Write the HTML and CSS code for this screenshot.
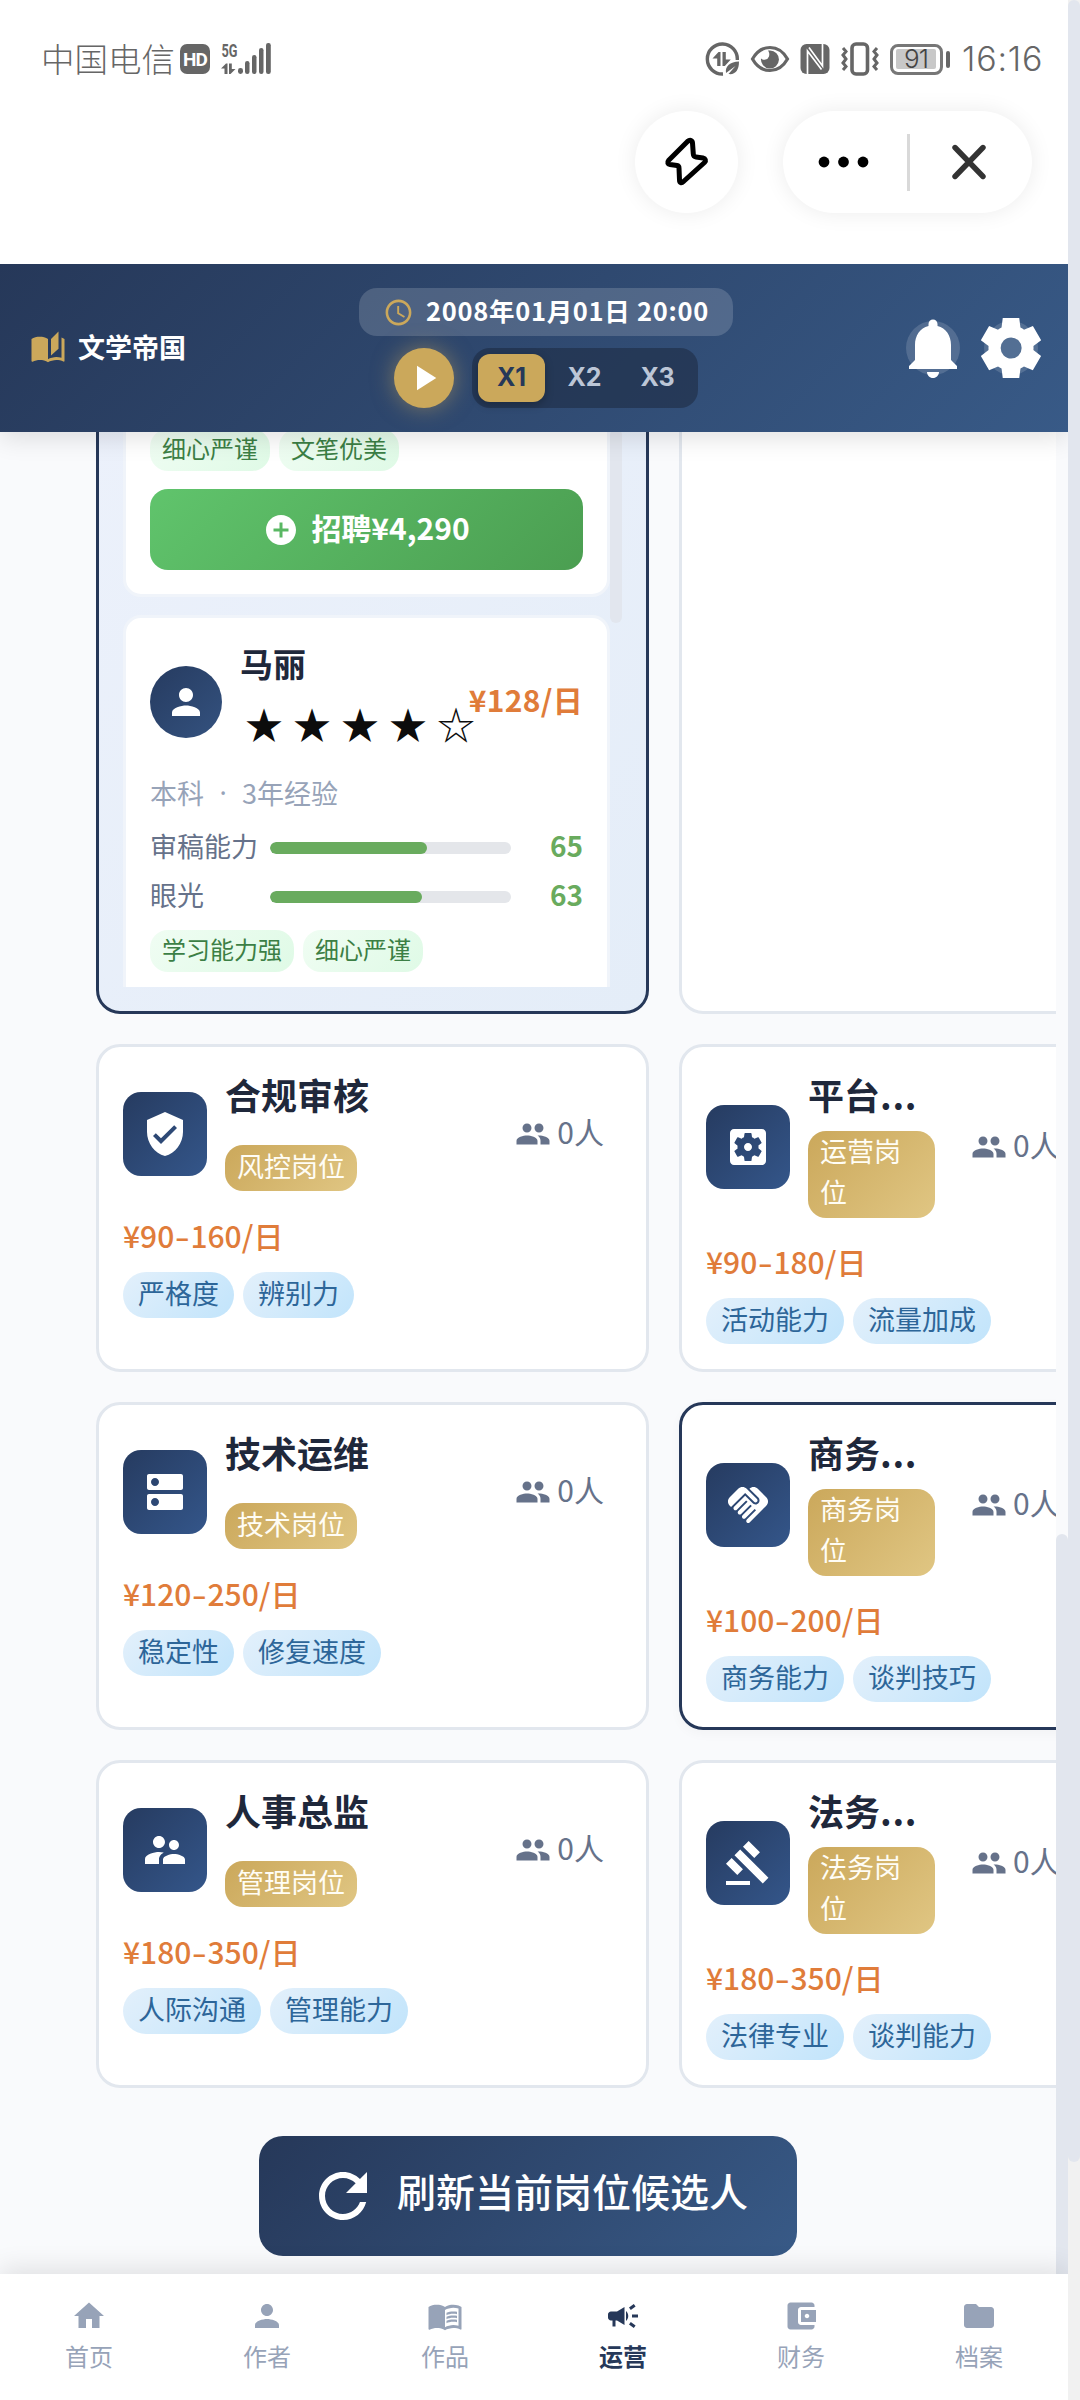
FILE: index.html
```html
<!DOCTYPE html>
<html lang="zh-CN">
<head>
<meta charset="utf-8">
<title>文学帝国</title>
<link rel="stylesheet" href="styles.css">
</head>
<body>
<svg class="defs" aria-hidden="true">
  <symbol id="i-people" viewBox="0 0 24 24"><path d="M16 11c1.66 0 2.99-1.34 2.99-3S17.66 5 16 5c-1.66 0-3 1.34-3 3s1.34 3 3 3zm-8 0c1.66 0 2.99-1.34 2.99-3S9.66 5 8 5C6.34 5 5 6.34 5 8s1.34 3 3 3zm0 2c-2.33 0-7 1.17-7 3.5V19h14v-2.5c0-2.33-4.67-3.5-7-3.5zm8 0c-.29 0-.62.02-.97.05 1.16.84 1.97 1.97 1.97 3.45V19h6v-2.5c0-2.33-4.67-3.5-7-3.5z"/></symbol>
  <symbol id="i-person" viewBox="0 0 24 24"><path d="M12 12c2.21 0 4-1.79 4-4s-1.79-4-4-4-4 1.79-4 4 1.79 4 4 4zm0 2c-2.67 0-8 1.34-8 4v2h16v-2c0-2.66-5.33-4-8-4z"/></symbol>
</svg>
<div class="screen">
  <div class="app">
    <div class="system">
      <div class="status">
        <div class="status-left">
          <span class="carrier">中国电信</span>
          <span class="hd">HD</span>
          <svg class="signal" width="50" height="32" viewBox="0 0 50 32">
            <text class="five-g" x="0.500" y="14" textLength="16" lengthAdjust="spacingAndGlyphs">5G</text>
            <path d="M6.500 20.500v10.500H3.500v-5.500H0l5-5zM8 20.500h2.800v5.500H14.500L9.500 31H8z" fill="#666"/>
            <g fill="#666"><rect x="17" y="25" width="5" height="6" rx="2.400"/><rect x="24" y="18" width="4.500" height="13" rx="2.200"/><rect x="31" y="12" width="4.500" height="19" rx="2.200"/><rect x="38" y="5" width="4.500" height="26" rx="2.200"/><rect x="45" y="0" width="4.800" height="31" rx="2.200"/></g>
          </svg>
        </div>
        <div class="status-right">
          <svg width="35" height="34" viewBox="0 0 35 34">
            <path d="M32.300 18A15 15 0 1 0 18 32" fill="none" stroke="#666" stroke-width="3.400"/>
            <path d="M15.500 10v14h-3.300v-7.500H7.500l6-6.500zM17.500 10h3.300v7.500h5l-6 6.500h-2.300z" fill="#666"/>
            <path d="M21 31c-1-7 4-11 13-11.500 0 9-4 13.500-10.500 12.500l7-8z" fill="#666"/>
          </svg>
          <svg width="40" height="28" viewBox="0 0 40 28">
            <path d="M2.500 14C7 6 13 2.500 20 2.500S33 6 37.500 14C33 22 27 25.500 20 25.500S7 22 2.500 14z" fill="none" stroke="#666" stroke-width="3.200"/>
            <path d="M20 5.500a9 9 0 1 1-9 8 5 5 0 0 0 8-2c.5-2 .5-4-1-6z" fill="#666"/>
          </svg>
          <svg width="30" height="32" viewBox="0 0 30 32">
            <rect x="0.500" y="1" width="29" height="30" rx="6" fill="#666"/>
            <path d="M7.500 31V8l14 18.500M9 4.500 22.500 23V1" fill="none" stroke="#fff" stroke-width="1.700"/>
          </svg>
          <svg width="40" height="34" viewBox="0 0 40 34" fill="none" stroke="#666">
            <rect x="12" y="2" width="15.500" height="30" rx="4" stroke-width="3.600"/>
            <path d="M3 6l3 3.500-3 3.500 3 4-3 4 3 3.500-3 3.500M37 6l-3 3.500 3 3.500-3 4 3 4-3 3.500 3 3.500" stroke-width="3"/>
          </svg>
          <span class="battery"><span>91</span></span>
          <span class="clock">16:16</span>
        </div>
      </div>
      <div class="mini-bar">
        <div class="round-btn">
          <svg width="46" height="50" viewBox="0 0 46 50" fill="none" stroke="#000" stroke-width="5" stroke-linejoin="round"><path d="M23.500 4.500 4.500 23.500c-1.500 1.800-.8 3.600 1.500 4l7 1c1.500.3 2 1 2 2.500L15.500 43c0 3 2 3.500 4 1.500L40.500 25.500c1.800-1.800 1-4-1.500-4.500l-7-1c-2-.3-2.600-1-2.700-3L28.500 6c-.2-3-2.700-3.500-5-1.500z"/></svg>
        </div>
        <div class="capsule">
          <svg class="dots" width="54" height="12" viewBox="0 0 54 12"><circle cx="7" cy="6" r="5.400"/><circle cx="26.500" cy="6" r="5.400"/><circle cx="46" cy="6" r="5.400"/></svg>
          <span class="divider"></span>
          <svg class="close" width="36" height="36" viewBox="0 0 36 36"><path d="M4 3.500 32 32.500M32 3.500 4 32.500" stroke="#333" stroke-width="5.400" stroke-linecap="round"/></svg>
        </div>
      </div>
    </div>

    <header class="header">
      <div class="brand">
        <svg width="36" height="36" viewBox="0 0 24 24" fill="#cba85b"><path d="M19 1l-5 5v11l5-4.500V1zM1 6v14.650c0 .25.25.5.5.5.1 0 .15-.05.25-.05C3.100 20.450 5.050 20 6.500 20c1.950 0 4.050.4 5.500 1.500V6c-1.450-1.100-3.550-1.500-5.500-1.500S2.450 4.900 1 6zm22 13.500V6c-.6-.45-1.250-.75-2-1v13.500c-1.100-.35-2.300-.5-3.500-.5-1.700 0-4.150.65-5.500 1.500v2c1.350-.85 3.800-1.500 5.500-1.500 1.650 0 3.350.3 4.750 1.050.1.05.15.05.25.05.25 0 .5-.25.5-.5v-1.100z"/></svg>
        <span>文学帝国</span>
      </div>
      <div class="time">
        <div class="date">
          <svg width="31" height="31" viewBox="0 0 24 24" fill="#cba85b"><path d="M11.990 2C6.470 2 2 6.480 2 12s4.470 10 9.990 10C17.520 22 22 17.520 22 12S17.520 2 11.990 2zM12 20c-4.420 0-8-3.580-8-8s3.580-8 8-8 8 3.580 8 8-3.580 8-8 8zm.5-13H11v6l5.250 3.150.75-1.230-4.500-2.670z"/></svg>
          <span>2008年01月01日 20:00</span>
        </div>
        <div class="controls">
          <span class="play"><svg width="42" height="42" viewBox="0 0 24 24" fill="#fff"><path d="M8 5v14l11-7z"/></svg></span>
          <div class="speeds"><span class="speed on">X1</span><span class="speed">X2</span><span class="speed">X3</span></div>
        </div>
      </div>
      <div class="actions">
        <span class="act"><svg width="72" height="72" viewBox="0 0 24 24" fill="#fff"><path d="M12 22c1.100 0 2-.9 2-2h-4c0 1.100.89 2 2 2zm6-6v-5c0-3.070-1.640-5.640-4.500-6.320V4c0-.83-.67-1.500-1.500-1.500s-1.500.67-1.500 1.500v.68C7.630 5.360 6 7.920 6 11v5l-2 2v1h16v-1l-2-2z"/></svg></span>
        <span class="act"><svg width="72" height="72" viewBox="0 0 24 24" fill="#fff"><path d="m9.250 22-.4-3.200q-.325-.125-.612-.3-.288-.175-.563-.375L4.700 19.375l-2.750-4.750 2.575-1.950Q4.500 12.500 4.500 12.337v-.675q0-.162.025-.337L1.950 9.375l2.750-4.750 2.975 1.250q.275-.2.575-.375.3-.175.6-.3l.4-3.200h5.500l.4 3.200q.325.125.613.3.287.175.562.375l2.975-1.250 2.750 4.750-2.575 1.950q.025.175.025.337v.675q0 .163-.05.338l2.575 1.950-2.750 4.750-2.950-1.250q-.275.2-.575.375-.3.175-.6.3l-.4 3.200zM12.050 15.500q1.450 0 2.475-1.025Q15.550 13.450 15.550 12q0-1.450-1.025-2.475Q13.500 8.500 12.050 8.500q-1.475 0-2.488 1.025Q8.550 10.550 8.550 12q0 1.450 1.012 2.475Q10.575 15.500 12.050 15.500z"/></svg></span>
      </div>
    </header>

    <main class="main">
      <div class="scroller">
        <div class="grid">
          <section class="job tall picked">
            <div class="candidates">
              <div class="list">
                <article class="cand cand-first">
                  <div class="traits"><span>细心严谨</span><span>文笔优美</span></div>
                  <div class="hire"><svg width="36" height="36" viewBox="0 0 24 24" fill="#fff"><path d="M12 2C6.480 2 2 6.480 2 12s4.480 10 10 10 10-4.480 10-10S17.520 2 12 2zm5 11h-4v4h-2v-4H7v-2h4V7h2v4h4v2z"/></svg><span>招聘¥4,290</span></div>
                </article>
                <article class="cand">
                  <div class="cand-head">
                    <span class="avatar"><svg width="42" height="42"><use href="#i-person"/></svg></span>
                    <div class="who"><div class="name">马丽</div><div class="stars"><i>★</i><i>★</i><i>★</i><i>★</i><i>☆</i></div></div>
                    <div class="pay">¥128/日</div>
                  </div>
                  <div class="meta"><span>本科</span><span class="sep">·</span><span>3年经验</span></div>
                  <div class="stat"><span class="label">审稿能力</span><span class="bar"><b style="width:65%"></b></span><span class="val">65</span></div>
                  <div class="stat"><span class="label">眼光</span><span class="bar"><b style="width:63%"></b></span><span class="val">63</span></div>
                  <div class="traits"><span>学习能力强</span><span>细心严谨</span></div>
                  <div class="hire"></div>
                </article>
              </div>
              <span class="thumb"></span>
            </div>
          </section>
          <section class="job tall"></section>

          <section class="job">
            <div class="head">
              <span class="icon"><svg width="48" height="48" viewBox="0 0 24 24"><path d="M12 1L3 5v6c0 5.550 3.840 10.740 9 12 5.160-1.260 9-6.450 9-12V5l-9-4zm-2 16l-4-4 1.410-1.410L10 14.170l6.590-6.590L18 9l-8 8z"/></svg></span>
              <div class="info"><div class="title">合规审核</div><span class="dept">风控岗位</span></div>
              <div class="count"><svg width="36" height="36"><use href="#i-people"/></svg><span>0人</span></div>
            </div>
            <div class="salary">¥90<s>-</s>160/日</div>
            <div class="skills"><span>严格度</span><span>辨别力</span></div>
          </section>
          <section class="job">
            <div class="head narrow">
              <span class="icon"><svg width="48" height="48" viewBox="0 0 24 24"><path d="M12 10c-1.100 0-2 .9-2 2s.9 2 2 2 2-.9 2-2-.9-2-2-2zm7-7H5c-1.110 0-2 .9-2 2v14c0 1.100.89 2 2 2h14c1.110 0 2-.9 2-2V5c0-1.100-.89-2-2-2zm-1.750 9c0 .23-.02.46-.05.68l1.480 1.160c.13.11.17.3.08.45l-1.400 2.420c-.09.15-.27.21-.43.15l-1.740-.7c-.36.28-.76.51-1.180.69l-.26 1.850c-.03.17-.18.3-.35.3h-2.800c-.17 0-.32-.13-.35-.29l-.26-1.850c-.43-.18-.82-.41-1.180-.69l-1.740.7c-.16.06-.34 0-.43-.15l-1.400-2.420c-.09-.15-.05-.34.08-.45l1.480-1.160c-.03-.23-.05-.46-.05-.69 0-.23.02-.46.05-.68l-1.480-1.160c-.13-.11-.17-.3-.08-.45l1.400-2.420c.09-.15.27-.21.43-.15l1.740.7c.36-.28.76-.51 1.180-.69l.26-1.850c.03-.17.18-.3.35-.3h2.800c.17 0 .32.13.35.29l.26 1.850c.43.18.82.41 1.180.69l1.740-.7c.16-.06.34 0 .43.15l1.400 2.420c.09.15.05.34-.08.45l-1.480 1.160c.03.23.05.46.05.69z"/></svg></span>
              <div class="info"><div class="title">平台<em>...</em></div><span class="dept">运营岗位</span></div>
              <div class="count"><svg width="36" height="36"><use href="#i-people"/></svg><span>0人</span></div>
            </div>
            <div class="salary">¥90<s>-</s>180/日</div>
            <div class="skills"><span>活动能力</span><span>流量加成</span></div>
          </section>

          <section class="job">
            <div class="head">
              <span class="icon"><svg width="48" height="48" viewBox="0 0 24 24"><path d="M20 13H4c-.55 0-1 .45-1 1v6c0 .55.45 1 1 1h16c.55 0 1-.45 1-1v-6c0-.55-.45-1-1-1zM7 19c-1.100 0-2-.9-2-2s.9-2 2-2 2 .9 2 2-.9 2-2 2zM20 3H4c-.55 0-1 .45-1 1v6c0 .55.45 1 1 1h16c.55 0 1-.45 1-1V4c0-.55-.45-1-1-1zM7 9c-1.100 0-2-.9-2-2s.9-2 2-2 2 .9 2 2-.9 2-2 2z"/></svg></span>
              <div class="info"><div class="title">技术运维</div><span class="dept">技术岗位</span></div>
              <div class="count"><svg width="36" height="36"><use href="#i-people"/></svg><span>0人</span></div>
            </div>
            <div class="salary">¥120<s>-</s>250/日</div>
            <div class="skills"><span>稳定性</span><span>修复速度</span></div>
          </section>
          <section class="job outlined">
            <div class="head narrow">
              <span class="icon"><svg width="48" height="48" viewBox="0 0 24 24"><path d="M16.480 10.410c-.39.39-1.040.39-1.430 0l-4.470-4.460-7.050 7.040-.66-.63c-1.170-1.170-1.170-3.070 0-4.240l4.240-4.240c1.170-1.170 3.070-1.170 4.240 0l5.130 5.120c.39.37.39 1.020 0 1.410zm.7-2.120c.78.78.78 2.050 0 2.830-1.270 1.270-2.610.22-2.830 0l-3.760-3.760-5.570 5.570c-.39.39-.39 1.020 0 1.410.39.39 1.020.39 1.420 0l4.620-4.620.71.71-4.620 4.620c-.39.39-.39 1.020 0 1.410.39.39 1.020.39 1.420 0l4.620-4.620.71.71-4.620 4.620c-.39.39-.39 1.020 0 1.410.39.39 1.020.39 1.410 0l4.620-4.620.71.71-4.620 4.620c-.39.39-.39 1.020 0 1.410.39.39 1.020.39 1.410 0l8.320-8.340c1.170-1.170 1.170-3.070 0-4.240l-4.240-4.240c-1.150-1.150-3.010-1.170-4.180-.06l4.470 4.470z"/></svg></span>
              <div class="info"><div class="title">商务<em>...</em></div><span class="dept">商务岗位</span></div>
              <div class="count"><svg width="36" height="36"><use href="#i-people"/></svg><span>0人</span></div>
            </div>
            <div class="salary">¥100<s>-</s>200/日</div>
            <div class="skills"><span>商务能力</span><span>谈判技巧</span></div>
          </section>

          <section class="job">
            <div class="head">
              <span class="icon"><svg width="48" height="48" viewBox="0 0 24 24"><path d="M16.500 12c1.380 0 2.490-1.120 2.490-2.500S17.880 7 16.500 7C15.120 7 14 8.120 14 9.500s1.120 2.500 2.500 2.500zM9 11c1.660 0 2.990-1.340 2.990-3S10.660 5 9 5C7.340 5 6 6.340 6 8s1.340 3 3 3zm7.500 3c-1.830 0-5.500.92-5.500 2.750V19h11v-2.250c0-1.830-3.670-2.750-5.500-2.750zM9 13c-2.330 0-7 1.170-7 3.500V19h7v-2.250c0-.85.33-2.340 2.370-3.470C10.500 13.100 9.660 13 9 13z"/></svg></span>
              <div class="info"><div class="title">人事总监</div><span class="dept">管理岗位</span></div>
              <div class="count"><svg width="36" height="36"><use href="#i-people"/></svg><span>0人</span></div>
            </div>
            <div class="salary">¥180<s>-</s>350/日</div>
            <div class="skills"><span>人际沟通</span><span>管理能力</span></div>
          </section>
          <section class="job">
            <div class="head narrow">
              <span class="icon"><svg width="48" height="48" viewBox="0 0 24 24"><path d="M1 21h12v2H1zM5.245 8.070l2.830-2.827 14.140 14.142-2.828 2.828zM12.317 1l5.657 5.656-2.830 2.830-5.654-5.660zM3.825 9.485l5.657 5.657-2.828 2.828-5.657-5.657z"/></svg></span>
              <div class="info"><div class="title">法务<em>...</em></div><span class="dept">法务岗位</span></div>
              <div class="count"><svg width="36" height="36"><use href="#i-people"/></svg><span>0人</span></div>
            </div>
            <div class="salary">¥180<s>-</s>350/日</div>
            <div class="skills"><span>法律专业</span><span>谈判能力</span></div>
          </section>
        </div>
        <div class="refresh"><svg width="72" height="72" viewBox="0 0 24 24" fill="#fff"><path d="M17.650 6.350C16.200 4.900 14.210 4 12 4c-4.420 0-7.990 3.580-7.990 8s3.570 8 7.990 8c3.730 0 6.840-2.550 7.730-6h-2.080c-.82 2.330-3.040 4-5.650 4-3.310 0-6-2.690-6-6s2.690-6 6-6c1.660 0 3.140.69 4.220 1.780L13 11h7V4l-2.350 2.350z"/></svg><span>刷新当前岗位候选人</span></div>
      </div>
      <div class="inner-track"><span></span></div>
    </main>

    <nav class="nav">
      <a><svg viewBox="0 0 24 24"><path d="M10 20v-6h4v6h5v-8h3L12 3 2 12h3v8z"/></svg><span>首页</span></a>
      <a><svg viewBox="0 0 24 24"><use href="#i-person"/></svg><span>作者</span></a>
      <a><svg viewBox="0 0 24 24"><path d="M21 5c-1.110-.35-2.330-.5-3.500-.5-1.950 0-4.050.4-5.500 1.500-1.450-1.100-3.550-1.500-5.500-1.500S2.450 4.900 1 6v14.650c0 .25.25.5.5.5.1 0 .15-.05.25-.05C3.100 20.450 5.050 20 6.500 20c1.950 0 4.050.4 5.500 1.500 1.350-.85 3.800-1.500 5.500-1.500 1.650 0 3.350.3 4.750 1.050.1.05.15.05.25.05.25 0 .5-.25.5-.5V6c-.6-.45-1.250-.75-2-1zm0 13.500c-1.100-.35-2.300-.5-3.500-.5-1.700 0-4.150.65-5.500 1.500V8c1.350-.85 3.800-1.500 5.500-1.500 1.200 0 2.400.15 3.500.5v11.500z"/><path d="M17.500 10.500c.88 0 1.730.09 2.500.26V9.240c-.79-.15-1.640-.24-2.500-.24-1.700 0-3.240.29-4.500.83v1.660c1.130-.64 2.700-.99 4.500-.99zM13 12.490v1.660c1.130-.64 2.700-.99 4.500-.99.88 0 1.730.09 2.500.26V11.900c-.79-.15-1.640-.24-2.500-.24-1.700 0-3.240.3-4.500.83zM17.500 14.330c-1.700 0-3.240.29-4.500.83v1.660c1.130-.64 2.700-.99 4.500-.99.88 0 1.730.09 2.500.26v-1.520c-.79-.16-1.640-.24-2.500-.24z"/></svg><span>作品</span></a>
      <a class="on"><svg viewBox="0 0 24 24"><path d="M18 11v2h4v-2h-4zm-2 6.610c.96.71 2.210 1.650 3.200 2.390.4-.53.8-1.070 1.200-1.600-.99-.74-2.240-1.680-3.200-2.400-.4.54-.8 1.080-1.200 1.610zM20.400 5.600c-.4-.53-.8-1.070-1.200-1.600-.99.74-2.240 1.680-3.200 2.400.4.53.8 1.070 1.200 1.600.96-.72 2.210-1.650 3.200-2.400zM4 9c-1.100 0-2 .9-2 2v2c0 1.100.9 2 2 2h1v4h2v-4h1l5 3V6L8 9H4zm11.500 3c0-1.330-.58-2.530-1.500-3.350v6.690c.92-.81 1.500-2.010 1.500-3.340z"/></svg><span>运营</span></a>
      <a><svg viewBox="0 0 24 24"><path d="M21 18v1c0 1.100-.9 2-2 2H5c-1.110 0-2-.9-2-2V5c0-1.100.89-2 2-2h14c1.100 0 2 .9 2 2v1h-9c-1.110 0-2 .9-2 2v8c0 1.100.89 2 2 2h9zm-9-2h10V8H12v8zm4-2.500c-.83 0-1.500-.67-1.500-1.500s.67-1.500 1.500-1.500 1.500.67 1.500 1.500-.67 1.500-1.500 1.500z"/></svg><span>财务</span></a>
      <a><svg viewBox="0 0 24 24"><path d="M10 4H4c-1.100 0-1.990.9-1.990 2L2 18c0 1.100.9 2 2 2h16c1.100 0 2-.9 2-2V8c0-1.100-.9-2-2-2h-8l-2-2z"/></svg><span>档案</span></a>
    </nav>
  </div>
  <div class="outer-track"><span></span></div>
</div>
</body>
</html>
```
FILE: styles.css
```css
* { box-sizing: border-box; }
body {
  margin: 0;
  background: #fff;
  font-family: "Noto Sans CJK SC", sans-serif;
  color: #1f283b;
}
svg { display: block; flex: none; }
i, em { font-style: normal; }
s { display: inline-block; margin: 0 2.700px; text-decoration: none; transform: scaleX(1.400); }
.defs { position: absolute; width: 0; height: 0; }
.screen { display: flex; width: 1080px; height: 2400px; overflow: hidden; }
.app { display: flex; flex-direction: column; width: 1068px; height: 2400px; }

.outer-track { width: 12px; background: #f1f1f1; }
.outer-track span { display: block; height: 2162px; border-radius: 6px; background: #e2e6ee; }

/* system area */
.system { height: 264px; padding-top: 38px; background: #fff; }
.status { display: flex; justify-content: space-between; height: 42px; padding: 0 26px 0 41px; color: #666; }
.status-left, .status-right { display: flex; align-items: center; }
.carrier { position: relative; top: -1px; width: 139px; font-size: 33.500px; font-weight: 300; line-height: 42px; white-space: nowrap; }
.hd {
  width: 30px; height: 30px; margin-right: 11px; border-radius: 7px;
  background: #666; color: #fff; text-align: center;
  font: 700 19px/31px "Roboto", sans-serif; letter-spacing: -1px;
}
.signal { overflow: visible; }
.five-g { font: 700 18.500px "Roboto", sans-serif; fill: #666; }
.status-right { gap: 10px; }
.battery {
  position: relative; width: 53px; height: 31px; padding: 3px; margin-right: 9px;
  border: 3px solid #777; border-radius: 8px;
}
.battery::after { content: ""; position: absolute; right: -10px; top: 4px; width: 4px; height: 17px; border-radius: 2px; background: #666; }
.battery span {
  display: block; width: 40px; height: 20px; margin-top: -.5px; border-radius: 2px; background: #c8c8c8;
  color: #444; text-align: center; font: 300 26px/20px "Inter", sans-serif; letter-spacing: -1px;
}
.clock { font: 300 34px/42px "Inter", sans-serif; letter-spacing: .8px; width: 80px; white-space: nowrap; }
.mini-bar { display: flex; justify-content: flex-end; gap: 45px; padding: 31px 36px 0 0; }
.round-btn, .capsule { display: flex; align-items: center; height: 102px; border-radius: 51px; background: #fff; box-shadow: 0 0 22px rgba(0,0,0,.08); }
.round-btn { width: 103px; justify-content: center; }
.capsule { width: 249px; padding-left: 34px; }
.divider { width: 3px; height: 57px; margin: 0 41px 0 36px; background: #d9d9d9; }

/* header */
.header {
  position: relative; z-index: 2;
  display: flex; justify-content: space-between; height: 168px; padding: 24px 30px;
  background: linear-gradient(135deg, #263859 0%, #385a87 100%);
  box-shadow: 0 6px 24px rgba(0,0,0,.12);
  clip-path: inset(0 0 -36px 0);
}
.brand { display: flex; align-items: center; gap: 12px; width: 329px; color: #fff; font-size: 27px; font-weight: 700; }
.brand span { position: relative; top: -2px; }
.time { display: flex; flex-direction: column; gap: 12px; width: 374px; align-items: center; }
.date {
  display: flex; align-items: center; gap: 12px; width: 374px; height: 48px; padding-left: 24px;
  border-radius: 18px; background: rgba(255,255,255,.16);
  color: #fff; font-size: 25.500px; font-weight: 700; letter-spacing: .700px; white-space: nowrap;
}
.date span { position: relative; top: -3px; }
.controls { display: flex; gap: 18px; }
.play {
  display: flex; align-items: center; justify-content: center; width: 60px; height: 60px;
  border-radius: 50%; background: #cba85b; box-shadow: 0 0 22px rgba(203,168,91,.5);
}
.speeds { display: flex; gap: 6px; width: 226px; padding: 6px; border-radius: 18px; background: rgba(30,45,70,.62); }
.speed { width: 67px; height: 48px; border-radius: 12px; color: #bcc6d6; text-align: center; font: 700 25px/47px "Inter", sans-serif; }
.speed.on { background: #cba85b; color: #263859; box-shadow: 0 3px 8px rgba(0,0,0,.25); }
.actions { display: flex; align-items: center; justify-content: flex-end; gap: 24px; width: 305px; }
.act { display: flex; align-items: center; justify-content: center; width: 54px; height: 54px; border-radius: 50%; background: rgba(255,255,255,.15); }

/* content */
.main { display: flex; flex: 1; height: 1842px; background: #f9fafc; overflow: hidden; }
.scroller { width: 1056px; overflow: hidden; }
.inner-track { width: 12px; }
.inner-track span { display: block; height: 760px; margin-top: 1102px; border-radius: 6px; background: #e2e6ee; }
.grid {
  display: grid; grid-template-columns: 553px 553px; grid-template-rows: 612px 328px 328px 328px; gap: 30px;
  margin: -30px 0 0 96px; width: 1136px;
}
.job { padding: 24px; border: 3px solid #e2e7ee; border-radius: 24px; background: #fff; min-width: 0; }
.job.picked { border-color: #263859; background: linear-gradient(135deg, #ecf1fb 0%, #e4edf8 100%); }
.job.outlined { border-color: #263859; box-shadow: 0 4px 12px rgba(0,0,0,.03); }

.candidates { display: flex; height: 558px; overflow: hidden; }
.list { width: 487px; height: 558px; overflow: hidden; }
.thumb { width: 12px; height: 194px; border-radius: 6px; background: #e2e6ee; }
.cand { padding: 24px; border: 3px solid #f0f4fa; border-radius: 18px; background: #fff; }
.cand-first { margin: -30px 0 18px; padding-top: 27px; }
.traits { display: flex; gap: 9px; }
.traits span {
  height: 42px; padding: 0 12px; border-radius: 18px; font-size: 24px; line-height: 37px; color: #3c7f45;
  background: linear-gradient(135deg, #f0fdf3 0%, #dffae6 100%); white-space: nowrap;
}
.hire {
  display: flex; align-items: center; justify-content: center; gap: 12px; height: 81px; margin-top: 18px;
  border-radius: 18px; background: linear-gradient(135deg, #60c46c 0%, #4b9e51 100%);
  color: #fff; font-size: 30px; font-weight: 700;
}
.hire span { position: relative; top: -3px; }
.cand-head { display: flex; align-items: center; height: 120px; }
.avatar { display: flex; flex: none; align-items: center; justify-content: center; width: 72px; height: 72px; border-radius: 50%; background: linear-gradient(135deg, #263b60, #34527f); fill: #fff; }
.who { flex: 1; min-width: 0; margin-left: 18px; }
.name { height: 48px; font-size: 33px; font-weight: 700; line-height: 43px; }
.stars { display: flex; height: 72px; color: #0c0c0c; }
.stars i { width: 48px; flex: none; text-align: center; font-size: 38px; line-height: 66px; }
.pay { flex: none; position: relative; top: -3px; z-index: 1; color: #e07c3a; font-size: 30px; font-weight: 700; letter-spacing: .300px; white-space: nowrap; }
.meta { display: flex; gap: 14px; height: 40px; margin: 12px 0 13px; color: #97a3b8; font-size: 27px; line-height: 38px; }
.meta .sep { width: 10px; text-align: center; font-family: "Noto Sans", sans-serif; }
.stat { display: flex; align-items: center; height: 41px; margin-bottom: 8px; }
.label { width: 120px; color: #66728a; font-size: 27px; line-height: 39px; position: relative; top: -2px; }
.bar { width: 241px; height: 12px; border-radius: 6px; background: #e4e6ea; overflow: hidden; }
.bar b { display: block; height: 12px; border-radius: 6px; background: #69ab5e; }
.val { flex: 1; text-align: right; color: #69ab5e; font-size: 28px; font-weight: 700; line-height: 39px; position: relative; top: -2px; }
.stat + .traits { margin-top: 13px; }

.head { display: flex; align-items: center; height: 126px; }
.head.narrow { height: 152px; }
.icon { display: flex; flex: none; align-items: center; justify-content: center; width: 84px; height: 84px; border-radius: 18px; background: linear-gradient(135deg, #263b60, #34568a); fill: #fff; }
.info { display: flex; flex-direction: column; align-items: flex-start; justify-content: space-between; height: 100%; margin-left: 18px; padding-bottom: 6px; }
.title { font-size: 36px; font-weight: 700; line-height: 46px; white-space: nowrap; }
.title em { margin-left: 0; letter-spacing: .700px; }
.dept { padding: 1px 12px 5px; border-radius: 18px; background: linear-gradient(135deg, #cba85b, #e0c683); color: #fffdf5; font-size: 27px; line-height: 40.500px; }
.narrow .info { width: 127px; padding-bottom: 5px; }
.narrow .dept { width: 127px; padding: 0 12px 6px; }
.count { display: flex; align-items: center; gap: 6px; margin-left: auto; padding-right: 18px; color: #66728a; fill: #66728a; font-size: 30px; white-space: nowrap; }
.count span { position: relative; top: -3px; }
.narrow .count { margin-left: 36px; }
.salary { height: 45px; margin: 18px 0 12px; color: #e07c3a; font-size: 30px; font-weight: 500; line-height: 41px; }
.skills { display: flex; gap: 9px; }
.skills span { height: 46px; padding: 0 15px; border-radius: 23px; background: linear-gradient(135deg, #e3f0fb, #c1e4fb); color: #2d6699; font-size: 27px; line-height: 42px; white-space: nowrap; }

.refresh {
  display: flex; align-items: center; gap: 18px; width: 538px; height: 120px; margin: 48px auto 0; padding-left: 48px;
  border-radius: 24px; background: linear-gradient(135deg, #263859 0%, #385a87 100%);
  color: #fff; font-size: 39px; font-weight: 500; white-space: nowrap;
}
.refresh span { position: relative; top: -6px; }

.nav { position: relative; z-index: 2; display: flex; height: 126px; background: #fff; box-shadow: 0 -6px 24px rgba(0,0,0,.1); clip-path: inset(-36px 0 0 0); }
.nav a { display: flex; flex: 1; flex-direction: column; align-items: center; padding-top: 24px; color: #97a3b8; fill: #97a3b8; font-size: 24px; line-height: 36px; }
.nav svg { width: 36px; height: 36px; }
.nav span { margin-top: 4px; }
.nav .on { color: #263859; fill: #263859; font-weight: 700; }
```
